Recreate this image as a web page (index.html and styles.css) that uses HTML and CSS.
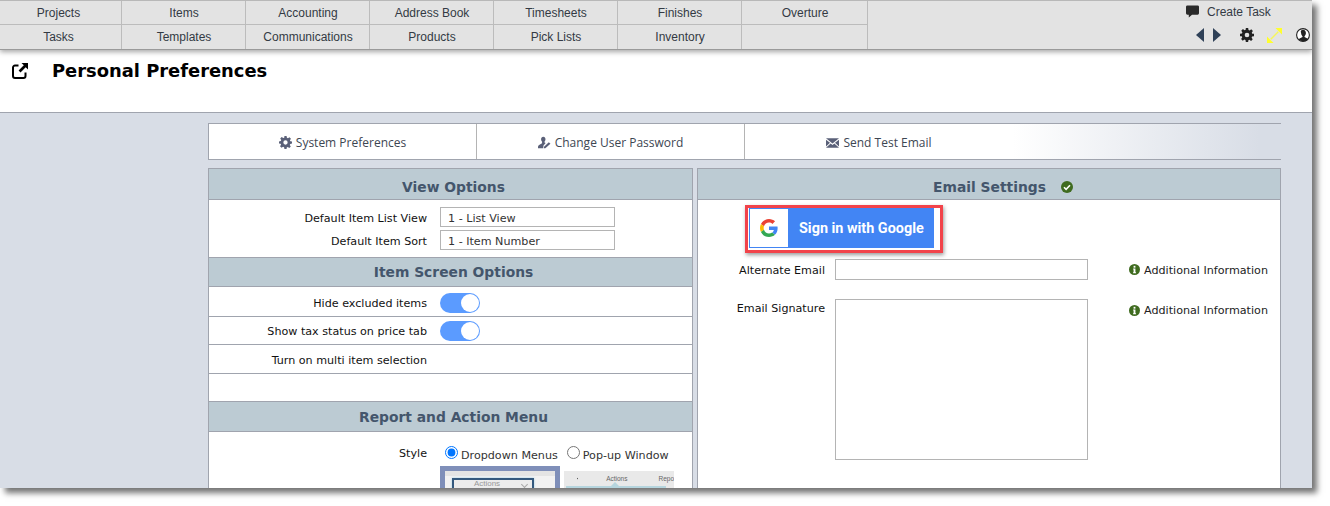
FILE: index.html
```html
<!DOCTYPE html>
<html lang="en">
<head>
    <meta charset="UTF-8">
    <title>Personal Preferences</title>
    <link rel="stylesheet" href="styles.css">
</head>
<body>

<div class="window">
    <!-- top menu -->
    <div class="topbar">
        <div class="menu">
            <a>Projects</a><a>Items</a><a>Accounting</a><a>Address Book</a><a>Timesheets</a><a>Finishes</a><a>Overture</a>
            <a>Tasks</a><a>Templates</a><a>Communications</a><a>Products</a><a>Pick Lists</a><a>Inventory</a><a></a>
        </div>
        <div class="tools">
            <div class="create-task">
                <svg class="ico-chat" viewBox="0 0 14 13"><path d="M1.500 0h11A1.500 1.500 0 0 1 14 1.500v7a1.500 1.500 0 0 1-1.500 1.500H6.500L3 13v-3H1.500A1.500 1.500 0 0 1 0 8.500v-7A1.500 1.500 0 0 1 1.500 0z"/></svg>
                <span>Create Task</span>
            </div>
            <div class="tool-icons">
                <svg class="ico-arrow" viewBox="0 0 9 14"><path d="M8 0v14L0 7z"/></svg>
                <svg class="ico-arrow" viewBox="0 0 9 14"><path d="M1 0v14l8-7z"/></svg>
                <svg class="ico-cog" viewBox="0 0 24 24"><use href="#cog"/></svg>
                <svg class="ico-expand" viewBox="0 0 16 16"><path d="M9 0h7v7zM0 9l7 7H0z"/><path d="M12 4l-8 8" fill="none" stroke="#f6f65a" stroke-width="1.500"/></svg>
                <svg class="ico-user" viewBox="0 0 14 14"><circle cx="7" cy="7" r="6.400" fill="#fff" stroke="#222" stroke-width="1.100"/><path d="M7 1.800c1.800 0 2.900 1.400 2.900 3.300 0 1.300-.6 2.500-1.400 3.200v.8l2.900 1.300c.5.300.8.700.9 1.100A6.300 6.300 0 0 1 7 13.300a6.300 6.300 0 0 1-4.300-1.800c.1-.4.400-.8.900-1.100l2.900-1.300v-.8c-.8-.7-1.400-1.900-1.400-3.200C4.100 3.200 5.200 1.800 7 1.800z" fill="#222"/></svg>
            </div>
        </div>
    </div>

    <div class="page-head">
        <svg class="ico-open" viewBox="0 0 16 16"><path d="M6.500 2.500H3A2 2 0 0 0 1 4.500V13a2 2 0 0 0 2 2h8.500a2 2 0 0 0 2-2V9.500" fill="none" stroke="#000" stroke-width="2"/><path d="M9.500 0H16v6.500l-2.300-2.300-5.200 5.200-1.900-1.900 5.200-5.200z"/></svg>
        <h1>Personal Preferences</h1>
    </div>

    <div class="content">
        <div class="tabs">
            <a class="tab">
                <svg class="ico-tab" viewBox="0 0 24 24"><use href="#cog"/></svg>System Preferences
            </a>
            <a class="tab">
                <svg class="ico-tab" viewBox="0 0 16 14"><path d="M6.500 0c1.700 0 2.700 1.300 2.700 3 0 1.200-.5 2.300-1.200 2.900v1l1.400.6L6.800 10.800 6.300 14H0v-1.800c0-1 .5-1.700 1.400-2.100L5 8V5.900C4.300 5.300 3.800 4.200 3.800 3 3.800 1.300 4.800 0 6.500 0z"/><path d="M13.300 6.700l2 1.900-6.300 5.400H7.100l.3-1.900z"/></svg>Change User Password
            </a>
            <a class="tab">
                <svg class="ico-tab ico-mail" viewBox="0 0 14 10"><path d="M0 0h14L7 5.600z"/><path d="M0 1.400v7.300L4.300 4.800zM14 1.400v7.300L9.700 4.800zM5 5.500L7 7.100l2-1.600L14 10H0z"/></svg>Send Test Email
            </a>
        </div>

        <div class="panels">
            <div class="panel panel-left">
                <h2 class="panel-title title-first">View Options</h2>
                <div class="view-options">
                    <div class="field">
                        <label>Default Item List View</label>
                        <div class="select-box">1 - List View</div>
                    </div>
                    <div class="field">
                        <label>Default Item Sort</label>
                        <div class="select-box">1 - Item Number</div>
                    </div>
                </div>

                <h2 class="panel-title title-item">Item Screen Options</h2>
                <div class="opt-row row-a">
                    <label>Hide excluded items</label>
                    <span class="toggle"></span>
                </div>
                <div class="opt-row row-b">
                    <label>Show tax status on price tab</label>
                    <span class="toggle"></span>
                </div>
                <div class="opt-row row-c">
                    <label>Turn on multi item selection</label>
                </div>
                <div class="opt-row row-d"></div>

                <h2 class="panel-title title-report">Report and Action Menu</h2>
                <div class="style-row">
                    <label>Style</label>
                    <div class="style-choices">
                        <div class="radios">
                            <span class="radio-item"><input type="radio" name="menustyle" checked>Dropdown Menus</span>
                            <span class="radio-item"><input type="radio" name="menustyle">Pop-up Window</span>
                        </div>
                        <div class="thumbs">
                            <div class="thumb thumb-on">
                                <div class="thumb-btn">Actions</div>
                            </div>
                            <div class="thumb thumb-off">
                                <div class="thumb-bar">
                                    <svg class="ico-pointer" viewBox="0 0 5 7"><path d="M0 0l5 4.500H3.200L4 7H2.600L2 4.800 0 6.500z"/></svg>
                                    <span class="thumb-actions">Actions</span>
                                    <span class="thumb-repo">Repo</span>
                                </div>
                                <div class="thumb-pop"></div>
                            </div>
                        </div>
                    </div>
                </div>
            </div>

            <div class="panel panel-right">
                <h2 class="panel-title title-first">
                    Email Settings
                    <svg class="ico-check" viewBox="0 0 12 12"><circle cx="6" cy="6" r="6"/><path d="M3 6.200l2.100 2.100L9 4.300" fill="none" stroke="#fff" stroke-width="1.600"/></svg>
                </h2>
                <div class="google-mark">
                    <div class="google-btn">
                        <span class="google-logo">
                            <svg viewBox="0 0 48 48">
                                <path fill="#EA4335" d="M24 9.500c3.540 0 6.710 1.220 9.210 3.600l6.850-6.850C35.900 2.380 30.470 0 24 0 14.620 0 6.510 5.380 2.560 13.220l7.980 6.190C12.430 13.720 17.740 9.500 24 9.500z"/>
                                <path fill="#4285F4" d="M46.980 24.550c0-1.570-.15-3.090-.38-4.550H24v9.020h12.940c-.58 2.960-2.260 5.480-4.780 7.180l7.730 6c4.510-4.180 7.090-10.360 7.090-17.650z"/>
                                <path fill="#FBBC05" d="M10.530 28.590c-.48-1.450-.76-2.990-.76-4.590s.27-3.140.76-4.590l-7.980-6.190C.92 16.460 0 20.120 0 24c0 3.880.92 7.540 2.560 10.780l7.970-6.190z"/>
                                <path fill="#34A853" d="M24 48c6.480 0 11.930-2.130 15.890-5.810l-7.730-6c-2.150 1.450-4.920 2.300-8.160 2.300-6.260 0-11.570-4.220-13.470-9.910l-7.980 6.190C6.510 42.620 14.620 48 24 48z"/>
                            </svg>
                        </span>
                        <span class="google-text">Sign in with Google</span>
                    </div>
                </div>
                <div class="email-form">
                    <label>Alternate Email</label>
                    <div class="text-box"></div>
                    <div class="info">
                        <svg class="ico-info" viewBox="0 0 12 12"><use href="#info"/></svg>Additional Information
                    </div>
                    <label class="label-sig">Email Signature</label>
                    <div class="text-area"></div>
                    <div class="info info-sig">
                        <svg class="ico-info" viewBox="0 0 12 12"><use href="#info"/></svg>Additional Information
                    </div>
                </div>
            </div>
        </div>
    </div>
</div>

<!-- shared icons -->
<svg class="defs" width="0" height="0">
    <defs>
        <symbol id="cog" viewBox="0 0 24 24">
            <path fill-rule="evenodd" d="M10 0h4l.6 3.300 1.900.8 2.800-1.900 2.800 2.800-1.900 2.800.8 1.900L24 10v4l-3.300.6-.8 1.900 1.900 2.800-2.800 2.800-2.800-1.900-1.900.8L14 24h-4l-.6-3.300-1.900-.8-2.800 1.900-2.800-2.800 1.900-2.800-.8-1.900L0 14v-4l3.300-.6.800-1.900-1.900-2.800 2.800-2.800 2.800 1.900 1.900-.8zM12 8a4 4 0 1 0 0 8 4 4 0 0 0 0-8z"/>
        </symbol>
        <symbol id="info" viewBox="0 0 12 12">
            <circle cx="6" cy="6" r="6" fill="#3f6b1f"/>
            <rect x="5" y="2" width="2" height="2" fill="#fff"/>
            <path d="M4.500 5H7v4h.7v1H4.400V9H5V6h-.5z" fill="#fff"/>
        </symbol>
    </defs>
</svg>

</body>
</html>
```

FILE: styles.css
```css
* {
    box-sizing: border-box;
}

html,
body {
    height: 100%;
}

body {
    margin: 0;
    background-color: #ffffff;
    font-family: "DejaVu Sans", Verdana, sans-serif;
    font-size: 11.15px;
    color: #111111;
    overflow: hidden;
}

.window {
    width: 1312px;
    height: 488px;
    background-color: #ffffff;
    box-shadow: 5px 5px 6px rgba(0, 0, 0, 0.55);
    overflow: hidden;
}

.defs {
    position: absolute;
}

/* top menu */
.topbar {
    display: flex;
    height: 50px;
    background-color: #e3e3e3;
    border-top: 1px solid #b8b8b8;
    border-bottom: 1px solid #9a9a9a;
    box-shadow: 0 2px 5px rgba(0, 0, 0, 0.35);
    position: relative;
    font-family: "Liberation Sans", Arial, sans-serif;
    font-size: 12px;
    color: #333a44;
}

.menu {
    display: grid;
    grid-template-columns: 122px repeat(5, 124px) 126px;
    grid-template-rows: 24px 24px;
    width: 868px;
}

.menu a {
    display: flex;
    align-items: center;
    justify-content: center;
    padding-left: 1px;
    border-right: 1px solid #bcbcbc;
}

.menu a:nth-child(-n+7) {
    border-bottom: 1px solid #bcbcbc;
}

.menu a:nth-child(7n+1) {
    padding: 0 4px 0 0;
}

.tools {
    margin-left: 318px;
    flex: 1;
}

.create-task {
    display: flex;
    align-items: center;
    height: 21px;
    font-size: 12px;
}

.ico-chat {
    width: 13px;
    height: 13px;
    margin-right: 8px;
    fill: #2a2a2a;
}

.tool-icons {
    display: flex;
    align-items: center;
    height: 26px;
    padding-left: 10px;
}

.ico-arrow {
    width: 9px;
    height: 14px;
    margin-right: 7px;
    fill: #2f4158;
}

.ico-cog {
    width: 14px;
    height: 14px;
    margin-left: 12px;
    fill: #222222;
}

.ico-expand {
    width: 15px;
    height: 15px;
    margin-left: 13px;
    fill: #ffff2e;
}

.ico-user {
    width: 14px;
    height: 14px;
    margin-left: 14px;
}

/* title */
.page-head {
    display: flex;
    align-items: flex-start;
    height: 63px;
    padding: 12px 0 0 12px;
    border-bottom: 1px solid #a0a4ae;
}

.ico-open {
    width: 16px;
    height: 16px;
    margin: 1px 24px 0 0;
    flex: none;
}

.page-head h1 {
    margin: 0;
    font-size: 17.9px;
    line-height: 18px;
    font-weight: bold;
    color: #000000;
}

/* content */
.content {
    height: 375px;
    padding: 10px 31px 0 208px;
    background-color: #d8dde6;
}

.tabs {
    display: flex;
    height: 37px;
    padding-top: 1px;
    border: 1px solid #a0a4ae;
    border-right: none;
    background: linear-gradient(to right, #ffffff 75%, #d8dde6 98%);
    font-family: "Open Sans", sans-serif;
    font-size: 12px;
    color: #3d4652;
}

.tab {
    display: flex;
    align-items: center;
    justify-content: center;
    width: 268px;
    margin-top: -1px;
    padding-top: 2px;
    border-right: 1px solid #b4b4b4;
}

.tab:last-child {
    border-right: none;
}

.ico-tab {
    width: 13px;
    height: 13px;
    margin-right: 4px;
    fill: #5a6078;
}

.ico-mail {
    width: 13px;
    height: 10px;
}

.panels {
    display: flex;
    gap: 4px;
    margin-top: 8px;
}

.panel {
    background-color: #ffffff;
    border: 1px solid #a0a4ae;
    border-bottom: none;
    height: 320px;
}

.panel-left {
    width: 485px;
}

.panel-right {
    width: 584px;
}

.panel-title {
    display: flex;
    align-items: center;
    justify-content: center;
    height: 31px;
    margin: 0;
    background-color: #bccbd3;
    border-bottom: 1px solid #a0a4ae;
    font-size: 13.85px;
    font-weight: bold;
    color: #44566c;
}

.panel-left .panel-title {
    padding-left: 6px;
}

.title-first {
    padding-top: 5px;
}

.title-item {
    height: 30px;
    border-top: 1px solid #a0a4ae;
}

.title-report {
    height: 31px;
    border-top: 1px solid #a0a4ae;
}

/* left panel rows */
.view-options {
    height: 57px;
    padding-top: 5px;
}

.field {
    display: flex;
    align-items: center;
    height: 23px;
}

.field label {
    padding-top: 4px;
}

.field label,
.opt-row label,
.style-row label {
    width: 218px;
    text-align: right;
    margin-right: 13px;
    flex: none;
}

.select-box {
    width: 175px;
    height: 20px;
    padding-left: 7px;
    line-height: 21px;
    border: 1px solid #b4b4b4;
    color: #333333;
}

.opt-row {
    display: flex;
    align-items: center;
    padding-top: 2px;
    border-bottom: 1px solid #a0a4ae;
}

.row-a { height: 30px; padding-top: 3px; }
.row-b { height: 28px; padding-top: 1px; }
.row-c { height: 29px; }
.row-d { height: 27px; border-bottom: none; }

.toggle {
    display: block;
    position: relative;
    width: 40px;
    height: 20px;
    border-radius: 10px;
    background-color: #5b9bff;
}

.toggle::after {
    content: "";
    position: absolute;
    top: 1px;
    right: 1px;
    width: 18px;
    height: 18px;
    border-radius: 50%;
    background-color: #ffffff;
}

.style-row {
    display: flex;
    padding-top: 14px;
}

.style-row label {
    line-height: 16px;
}

.radios {
    display: flex;
    gap: 9px;
    height: 20px;
    color: #333333;
}

.radio-item {
    display: flex;
    align-items: flex-start;
    line-height: 20px;
    padding-left: 5px;
}

.radio-item + .radio-item {
    padding-left: 0;
}

.radio-item input {
    width: 13px;
    height: 13px;
    margin: 0 3px 0 0;
}

.thumbs {
    display: flex;
    gap: 4px;
}

.thumb {
    height: 22px;
    overflow: hidden;
    font-family: "Liberation Sans", Arial, sans-serif;
}

.thumb-on {
    width: 120px;
    padding: 7px 0 0 7px;
    border: 5px solid #7f8fb9;
    border-bottom: none;
    background: linear-gradient(#e4e4e4 5px, #f2f2f2 5px);
}

.thumb-btn {
    position: relative;
    width: 82px;
    height: 20px;
    padding-right: 12px;
    text-align: center;
    font-size: 8px;
    line-height: 7px;
    color: #999999;
    border: 2px solid #34597e;
    box-shadow: 0 0 2px #9fd0e6;
    background-color: #ececec;
}

.thumb-btn::after {
    content: "";
    position: absolute;
    top: 2px;
    right: 5px;
    width: 4px;
    height: 4px;
    border-right: 1px solid #aaaaaa;
    border-bottom: 1px solid #aaaaaa;
    transform: rotate(45deg);
}

.thumb-off {
    width: 110px;
    margin-top: 5px;
    padding-top: 4px;
    background-color: #e9e9e9;
    font-size: 6.5px;
    color: #666666;
}

.thumb-bar {
    display: flex;
    align-items: center;
    height: 7px;
    line-height: 7px;
}

.ico-pointer {
    width: 5px;
    height: 7px;
    margin-left: 13px;
    fill: #333333;
}

.thumb-actions {
    margin-left: 28px;
}

.thumb-repo {
    margin-left: 31px;
    white-space: nowrap;
}

.thumb-pop {
    position: relative;
    height: 8px;
    margin: 4px 8px 0 2px;
    background-color: #b6d5de;
}

.thumb-pop::before {
    content: "";
    position: absolute;
    top: -4px;
    left: 45px;
    border-left: 4px solid transparent;
    border-right: 4px solid transparent;
    border-bottom: 4px solid #b6d5de;
}

/* right panel */
.panel-right .panel-title {
    gap: 15px;
    padding-left: 28px;
}

.ico-check {
    width: 12px;
    height: 12px;
    fill: #3f6b1f;
}

.google-mark {
    display: flex;
    width: 198px;
    height: 48px;
    margin: 5px 0 0 47px;
    padding: 0 6px 0 1px;
    border: 3px solid #f2434a;
    box-shadow: 1px 2px 4px rgba(0, 0, 0, 0.4);
}

.google-btn {
    display: flex;
    align-items: center;
    width: 100%;
    height: 40px;
    padding: 0 1px;
    background-color: #4285f4;
}

.google-logo {
    display: flex;
    align-items: center;
    justify-content: center;
    width: 38px;
    height: 38px;
    background-color: #ffffff;
}

.google-logo svg {
    width: 18px;
    height: 18px;
}

.google-text {
    margin-left: 11px;
    font-family: Roboto, sans-serif;
    font-size: 14.4px;
    font-weight: 700;
    color: #ffffff;
}

.email-form {
    display: grid;
    grid-template-columns: 127px 253px auto;
    grid-template-rows: 40px auto;
    column-gap: 10px;
    margin-top: 6px;
}

.email-form label {
    text-align: right;
    line-height: 23px;
}

.email-form .label-sig {
    line-height: 20px;
}

.text-box {
    height: 21px;
    border: 1px solid #b4b4b4;
}

.text-area {
    height: 161px;
    border: 1px solid #b4b4b4;
}

.info {
    display: flex;
    align-items: flex-start;
    height: 21px;
    margin-left: 31px;
    line-height: 23px;
    color: #222222;
}

.ico-info {
    width: 11px;
    height: 11px;
    margin: 5px 4px 0 0;
}

.info-sig .ico-info {
    margin-top: 6px;
}
```
